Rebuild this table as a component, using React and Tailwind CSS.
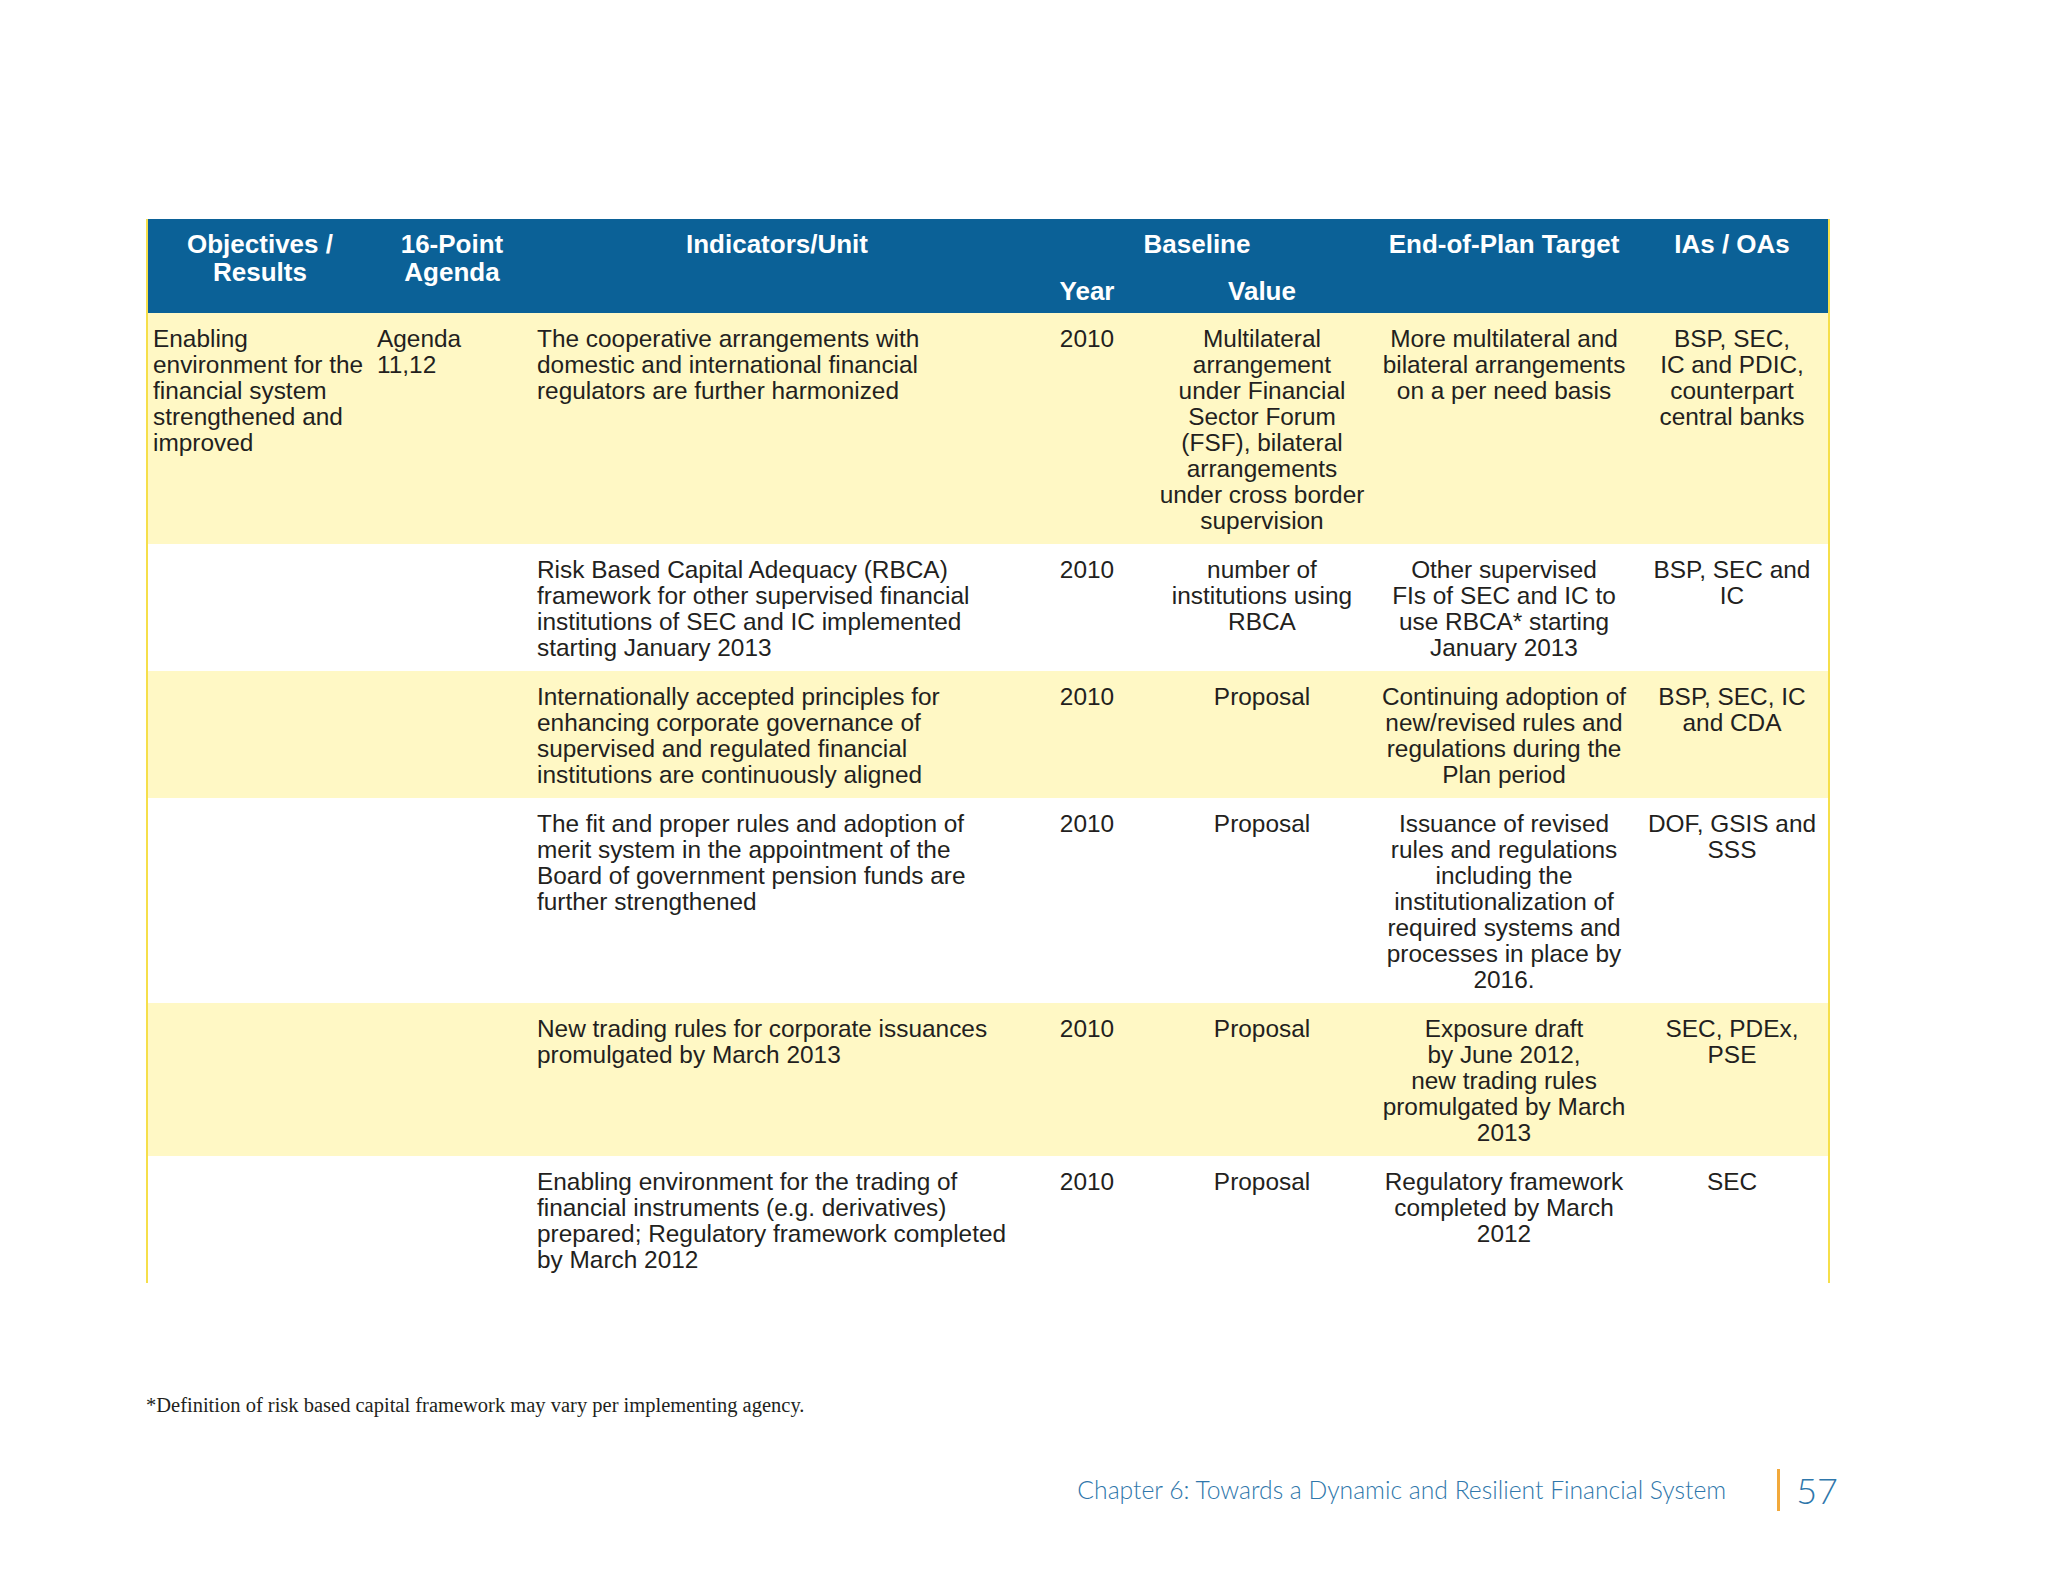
import React from "react";

const rows = [
  {
    bg: "bg-[#fff8c5]",
    obj: ["Enabling", "environment for the", "financial system", "strengthened and", "improved"],
    agenda: ["Agenda", "11,12"],
    ind: ["The cooperative arrangements with", "domestic and international financial", "regulators are further harmonized"],
    value: ["Multilateral", "arrangement", "under Financial", "Sector Forum", "(FSF), bilateral", "arrangements", "under cross border", "supervision"],
    target: ["More multilateral and", "bilateral arrangements", "on a per need basis"],
    ias: ["BSP, SEC,", "IC and PDIC,", "counterpart", "central banks"],
  },
  {
    bg: "bg-white",
    ind: ["Risk Based Capital Adequacy (RBCA)", "framework for other supervised financial", "institutions of SEC and IC implemented", "starting January 2013"],
    value: ["number of", "institutions using", "RBCA"],
    target: ["Other supervised", "FIs of SEC and IC to", "use RBCA* starting", "January 2013"],
    ias: ["BSP, SEC and", "IC"],
  },
  {
    bg: "bg-[#fff8c5]",
    ind: ["Internationally accepted principles for", "enhancing corporate governance of", "supervised and regulated financial", "institutions are continuously aligned"],
    value: ["Proposal"],
    target: ["Continuing adoption of", "new/revised rules and", "regulations during the", "Plan period"],
    ias: ["BSP, SEC, IC", "and CDA"],
  },
  {
    bg: "bg-white",
    ind: ["The fit and proper rules and adoption of", "merit system in the appointment of the", "Board of government pension funds are", "further strengthened"],
    value: ["Proposal"],
    target: ["Issuance of revised", "rules and regulations", "including the", "institutionalization of", "required systems and", "processes in place by", "2016."],
    ias: ["DOF, GSIS and", "SSS"],
  },
  {
    bg: "bg-[#fff8c5]",
    ind: ["New trading rules for corporate issuances", "promulgated by March 2013"],
    value: ["Proposal"],
    target: ["Exposure draft", "by June 2012,", "new trading rules", "promulgated by March", "2013"],
    ias: ["SEC, PDEx,", "PSE"],
  },
  {
    bg: "bg-white",
    ind: ["Enabling environment for the trading of", "financial instruments (e.g. derivatives)", "prepared; Regulatory framework completed", "by March 2012"],
    value: ["Proposal"],
    target: ["Regulatory framework", "completed by March", "2012"],
    ias: ["SEC"],
  },
];

const cols = "grid grid-cols-[224px_160px_490px_130px_220px_264px_192px]";

function Lines({ lines = [], className = "" }) {
  return (
    <div className={"whitespace-nowrap " + className}>
      {lines.map((l, i) => (
        <div key={i}>{l}</div>
      ))}
    </div>
  );
}

function Header() {
  const th = "text-white font-bold text-[26px] leading-[28px] text-center";
  return (
    <div className={cols + " grid-rows-[58px_36px] bg-[#0b6197]"}>
      <div className={th + " row-span-2 pt-[11px]"}>Objectives /<br />Results</div>
      <div className={th + " row-span-2 pt-[11px]"}>16-Point<br />Agenda</div>
      <div className={th + " row-span-2 pt-[11px]"}>Indicators/Unit</div>
      <div className={th + " col-span-2 pt-[11px]"}>Baseline</div>
      <div className={th + " row-span-2 pt-[11px]"}>End-of-Plan Target</div>
      <div className={th + " row-span-2 pt-[11px]"}>IAs / OAs</div>
      <div className={th}>Year</div>
      <div className={th}>Value</div>
    </div>
  );
}

function Row({ r }) {
  const td = "pt-[13px] pb-[10px]";
  return (
    <div className={cols + " " + r.bg + " text-[24.4px] leading-[26px] text-[#231f20]"}>
      <Lines lines={r.obj} className={td + " pl-[5px]"} />
      <Lines lines={r.agenda} className={td + " pl-[5px]"} />
      <Lines lines={r.ind} className={td + " pl-[5px]"} />
      <Lines lines={["2010"]} className={td + " text-center"} />
      <Lines lines={r.value} className={td + " text-center"} />
      <Lines lines={r.target} className={td + " text-center"} />
      <Lines lines={r.ias} className={td + " text-center"} />
    </div>
  );
}

export default function App() {
  return (
    <div className="w-[2048px] h-[1582px] bg-white flex flex-col pt-[219px] font-['Liberation_Sans',Arial,sans-serif]">
      <div className="ml-[146px] w-[1684px] border-x-2 border-[#f6df4a]">
        <Header />
        {rows.map((r, i) => (
          <Row key={i} r={r} />
        ))}
      </div>

      <p className="ml-[146px] mt-[110px] text-[20.5px] leading-[24px] text-[#231f20] font-['Liberation_Serif',serif]">
        *Definition of risk based capital framework may vary per implementing agency.
      </p>

      <div className="mt-[52px] flex items-center justify-end pr-[210px] text-[#2f77ab]">
        <span className="font-['Lato',sans-serif] font-light text-[24.7px] leading-[30px]">
          Chapter 6: Towards a Dynamic and Resilient Financial System
        </span>
        <span className="ml-[51px] w-[3px] h-[42px] bg-[#f2a93b]" />
        <span className="ml-[16px] font-['Lato',sans-serif] font-light text-[36px] leading-[42px]">57</span>
      </div>
    </div>
  );
}
